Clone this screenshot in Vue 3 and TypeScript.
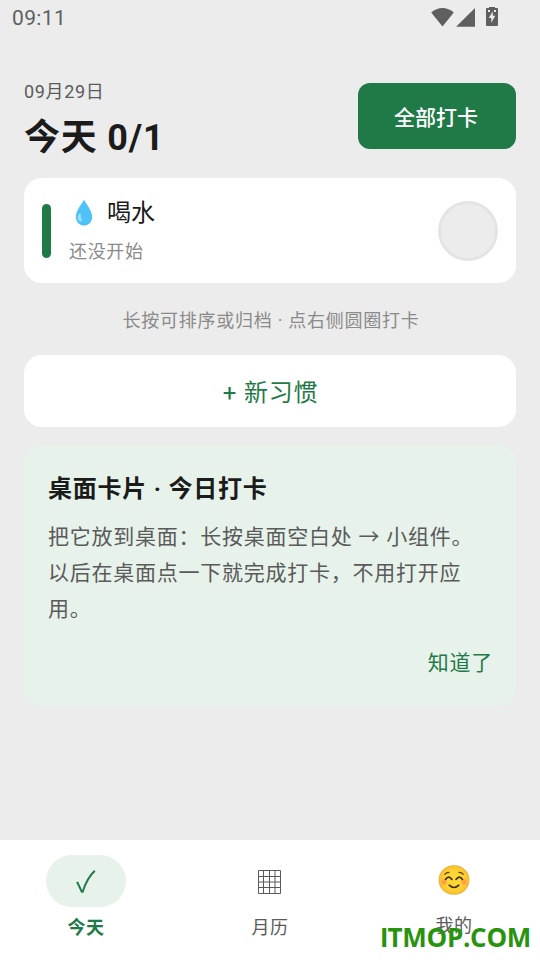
<script setup lang="ts">
import { ref } from 'vue'

interface Habit {
  id: number
  name: string
  status: string
  done: boolean
}

interface Tab {
  key: 'today' | 'month' | 'mine'
  label: string
}

const habits = ref<Habit[]>([{ id: 1, name: '喝水', status: '还没开始', done: false }])
const tabs: Tab[] = [
  { key: 'today', label: '今天' },
  { key: 'month', label: '月历' },
  { key: 'mine', label: '我的' },
]
const activeTab = ref<Tab['key']>('today')
</script>

<template>
  <div class="screen">
    <header class="status-bar">
      <span class="clock">09:11</span>
      <div class="status-icons">
        <svg class="wifi" width="24" height="20" viewBox="0 0 24 20">
          <path d="M1.2 5.4Q6.4 0.9 12.5 0.9T23.8 5.4L12.5 19.6Z" />
        </svg>
        <svg class="signal" width="20" height="20" viewBox="0 0 20 20">
          <path d="M20 0.9V19.8H1.1Z" />
        </svg>
        <svg class="battery" width="12" height="20" viewBox="0 0 12 20">
          <path fill-rule="evenodd" d="M3 0H9V1H11Q12 1 12 2V18Q12 19 11 19H1Q0 19 0 18V2Q0 1 1 1H3ZM2 3V5H4V3ZM8 3V5H10V3ZM6.8 4.2L2.8 11H5.3V15.7L9.3 8.8H6.8Z" />
        </svg>
      </div>
    </header>

    <main class="content">
      <section class="heading">
        <div class="titles">
          <p class="date">09月29日</p>
          <h1 class="title">今天 0/1</h1>
        </div>
        <button class="check-all">全部打卡</button>
      </section>

      <article v-for="habit in habits" :key="habit.id" class="habit">
        <span class="stripe"></span>
        <div class="habit-info">
          <div class="habit-name">
            <svg class="drop" width="30" height="28" viewBox="0 0 30 28">
              <path fill="#4fc3f7" d="M15 1.4C16.3 4.9 23.2 12 23.2 19.2A8.2 8.2 0 0 1 6.8 19.2C6.8 12 13.7 4.9 15 1.4Z" />
              <path fill="#29b6f6" opacity=".35" d="M7.1 21.7C9.8 27.4 20 27 22.9 21.7C20.6 29.4 9.4 29.4 7.1 21.7Z" />
              <path fill="#b3e5fc" opacity=".85" d="M10.2 16C11.5 14.9 12.1 16.4 11.8 18.2C11.5 20.1 13.6 21.6 12.6 23.1C11.5 24.6 8.8 21.7 8.8 19.4C8.8 18 9.3 16.7 10.2 16Z" />
            </svg>
            <span class="habit-label">{{ habit.name }}</span>
          </div>
          <p class="habit-status">{{ habit.status }}</p>
        </div>
        <button class="circle" @click="habit.done = !habit.done"></button>
      </article>

      <p class="hint">长按可排序或归档 · 点右侧圆圈打卡</p>
      <button class="new-habit">+ 新习惯</button>

      <section class="tip">
        <h2 class="tip-title">桌面卡片 · 今日打卡</h2>
        <p class="tip-body">把它放到桌面：长按桌面空白处 → 小组件。<br />以后在桌面点一下就完成打卡，不用打开应<br />用。</p>
        <button class="tip-action">知道了</button>
      </section>
    </main>

    <nav class="tabs">
      <button
        v-for="tab in tabs"
        :key="tab.key"
        :class="['tab', tab.key, { active: activeTab === tab.key }]"
        @click="activeTab = tab.key"
      >
        <span class="tab-icon">
          <svg v-if="tab.key === 'today'" width="24" height="26" viewBox="0 0 24 26">
            <path class="tick" d="M2.6 14.2L3.6 13.8L7.8 22.8L8.7 22.8C11.2 14.8 15.2 7 20.8 1.8" />
          </svg>
          <svg v-else-if="tab.key === 'month'" width="24" height="24" viewBox="0 0 24 24">
            <path class="grid" d="M.5 .5H22.5V23.5H.5ZM.5 6.5H22.5M.5 12H22.5M.5 17.5H22.5M5.5 .5V23.5M11.5 .5V23.5M17 .5V23.5" />
          </svg>
          <svg v-else width="32" height="30" viewBox="0 0 32 30">
            <defs>
              <radialGradient id="face"><stop offset=".5" stop-color="#fdd835" /><stop offset=".9" stop-color="#fbc52f" /><stop offset="1" stop-color="#f2a52b" /></radialGradient>
              <radialGradient id="blush"><stop stop-color="#ff7555" stop-opacity=".75" /><stop offset="1" stop-color="#ff7555" stop-opacity="0" /></radialGradient>
            </defs>
            <ellipse cx="16" cy="15" rx="15.4" ry="14.7" fill="url(#face)" />
            <circle cx="6" cy="17" r="4.2" fill="url(#blush)" />
            <circle cx="26" cy="17" r="4.2" fill="url(#blush)" />
            <path class="brow" d="M6.7 9.3Q8.2 7.4 11 7.4M21 7.4Q23.8 7.4 25.3 9.3" />
            <path class="eye" d="M7.5 14.5Q10.7 9.8 14 14.5M18 14.5Q21.3 9.8 24.5 14.5" />
            <path class="eye" d="M11.2 20.2Q16 24.8 20.8 20.2" />
          </svg>
        </span>
        <span class="tab-label">{{ tab.label }}</span>
      </button>
      <span class="watermark"><span class="plain-i">I</span>TMOP.COM</span>
    </nav>
  </div>
</template>

<style>
body {
  margin: 0;
  background: #ececec;
}
</style>

<style scoped>
.screen {
  display: flex;
  flex-direction: column;
  width: 540px;
  height: 960px;
  overflow: hidden;
  background: #ececec;
  color: #1b1b1b;
  font-family: Roboto, "Noto Sans CJK SC", sans-serif;
}

p, h1, h2 {
  margin: 0;
}

button {
  padding: 0;
  border: 0;
  font-family: inherit;
  color: inherit;
}

.status-bar {
  display: flex;
  justify-content: space-between;
  height: 36px;
  padding: 0 42px 0 12px;
  color: #5f5f5f;
}

.clock {
  font-size: 21px;
  font-weight: 450;
  line-height: 36px;
  letter-spacing: 0.35px;
}

.status-icons {
  display: flex;
  gap: 1px;
  padding-top: 7px;
  fill: #5f5f5f;
}

.battery {
  margin-left: 10px;
}

.content {
  flex: 1;
  display: flex;
  flex-direction: column;
  padding: 40px 24px 0;
}

.heading {
  display: flex;
  justify-content: space-between;
  height: 102px;
}

.date {
  padding-top: 1px;
  font-size: 18px;
  line-height: 30px;
  letter-spacing: 0.65px;
  color: #5a5a5a;
}

.title {
  padding-top: 1px;
  font-size: 36px;
  font-weight: 700;
  line-height: 60px;
  letter-spacing: 0.8px;
}

.check-all {
  width: 158px;
  height: 66px;
  box-sizing: border-box;
  margin-top: 7px;
  padding: 4px 2px 0 0;
  border-radius: 12px;
  background: #1f7a48;
  color: #fff;
  font-size: 21px;
  font-weight: 500;
  line-height: 62px;
}

.habit {
  display: flex;
  align-items: center;
  height: 105px;
  box-sizing: border-box;
  padding: 0 18px;
  border-radius: 18px;
  background: #fff;
}

.stripe {
  width: 9px;
  height: 54px;
  border-radius: 5px;
  background: #1f7a48;
}

.habit-info {
  flex: 1;
  padding-left: 18px;
}

.habit-name {
  display: flex;
  align-items: center;
  gap: 8px;
  height: 39px;
  font-size: 24px;
}

.habit-label {
  padding-top: 2px;
  line-height: 39px;
}

.habit-status {
  padding-top: 3px;
  font-size: 18px;
  line-height: 34px;
  letter-spacing: 0.65px;
  color: #8a8a8a;
}

.circle {
  width: 60px;
  height: 60px;
  border: 3px solid #e4e4e4;
  border-radius: 50%;
  background: #ececec;
}

.hint {
  padding: 23px 0 19px 2px;
  font-size: 18px;
  line-height: 30px;
  letter-spacing: 0.75px;
  text-align: center;
  color: #8a8a8a;
}

.new-habit {
  height: 72px;
  box-sizing: border-box;
  padding: 4px 0 0 1px;
  border-radius: 18px;
  background: #fff;
  color: #1f7a48;
  font-size: 24px;
  line-height: 68px;
  letter-spacing: 0.75px;
}

.tip {
  display: flex;
  flex-direction: column;
  height: 261px;
  box-sizing: border-box;
  margin-top: 18px;
  padding: 25px 23px 0 24px;
  border-radius: 18px;
  background: #e7f2ea;
}

.tip-title {
  font-size: 24px;
  font-weight: 700;
  line-height: 38px;
  letter-spacing: 0.75px;
}

.tip-body {
  margin-top: 11px;
  font-size: 21px;
  line-height: 36px;
  letter-spacing: 0.75px;
  white-space: nowrap;
  color: #5a5a5a;
}

.tip-action {
  align-self: flex-end;
  margin-top: 18px;
  background: none;
  color: #1f7a48;
  font-size: 21px;
  line-height: 36px;
  letter-spacing: 0.75px;
}

.tabs {
  position: relative;
  display: flex;
  justify-content: space-between;
  height: 120px;
  box-sizing: border-box;
  padding: 15px 46px 0;
  background: #fff;
}

.tab {
  display: flex;
  flex-direction: column;
  align-items: center;
  width: 80px;
  background: none;
  color: #5a5a5a;
}

.tab-icon {
  display: flex;
  align-items: center;
  justify-content: center;
  width: 80px;
  height: 52px;
  box-sizing: border-box;
  padding-top: 2px;
  border-radius: 26px;
}

.tab-label {
  font-size: 18px;
  line-height: 30px;
  letter-spacing: 0.6px;
  margin-top: 6px;
}

.active {
  color: #1f7a48;
}

.active .tab-icon {
  background: #e7f2ea;
}

.active .tab-label {
  font-weight: 700;
}

.mine .tab-icon {
  height: 50px;
  padding-top: 0;
}

.tick, .grid, .brow, .eye {
  fill: none;
}

.tick {
  stroke: #1f7a48;
  stroke-width: 2;
}

.grid {
  stroke: #5a5a5a;
  stroke-width: 1;
}

.brow {
  stroke: #5b4220;
  stroke-width: 1.2;
  stroke-linecap: round;
}

.eye {
  stroke: #422b0d;
  stroke-width: 1.6;
  stroke-linecap: round;
}

.watermark {
  position: absolute;
  right: 9px;
  bottom: 5px;
  font-family: "Open Sans", sans-serif;
  font-size: 26px;
  font-weight: 700;
  line-height: 36px;
  letter-spacing: -0.3px;
  color: #27930f;
}

.plain-i {
  font-family: Lato, sans-serif;
  font-weight: 900;
  letter-spacing: -0.6px;
}
</style>
